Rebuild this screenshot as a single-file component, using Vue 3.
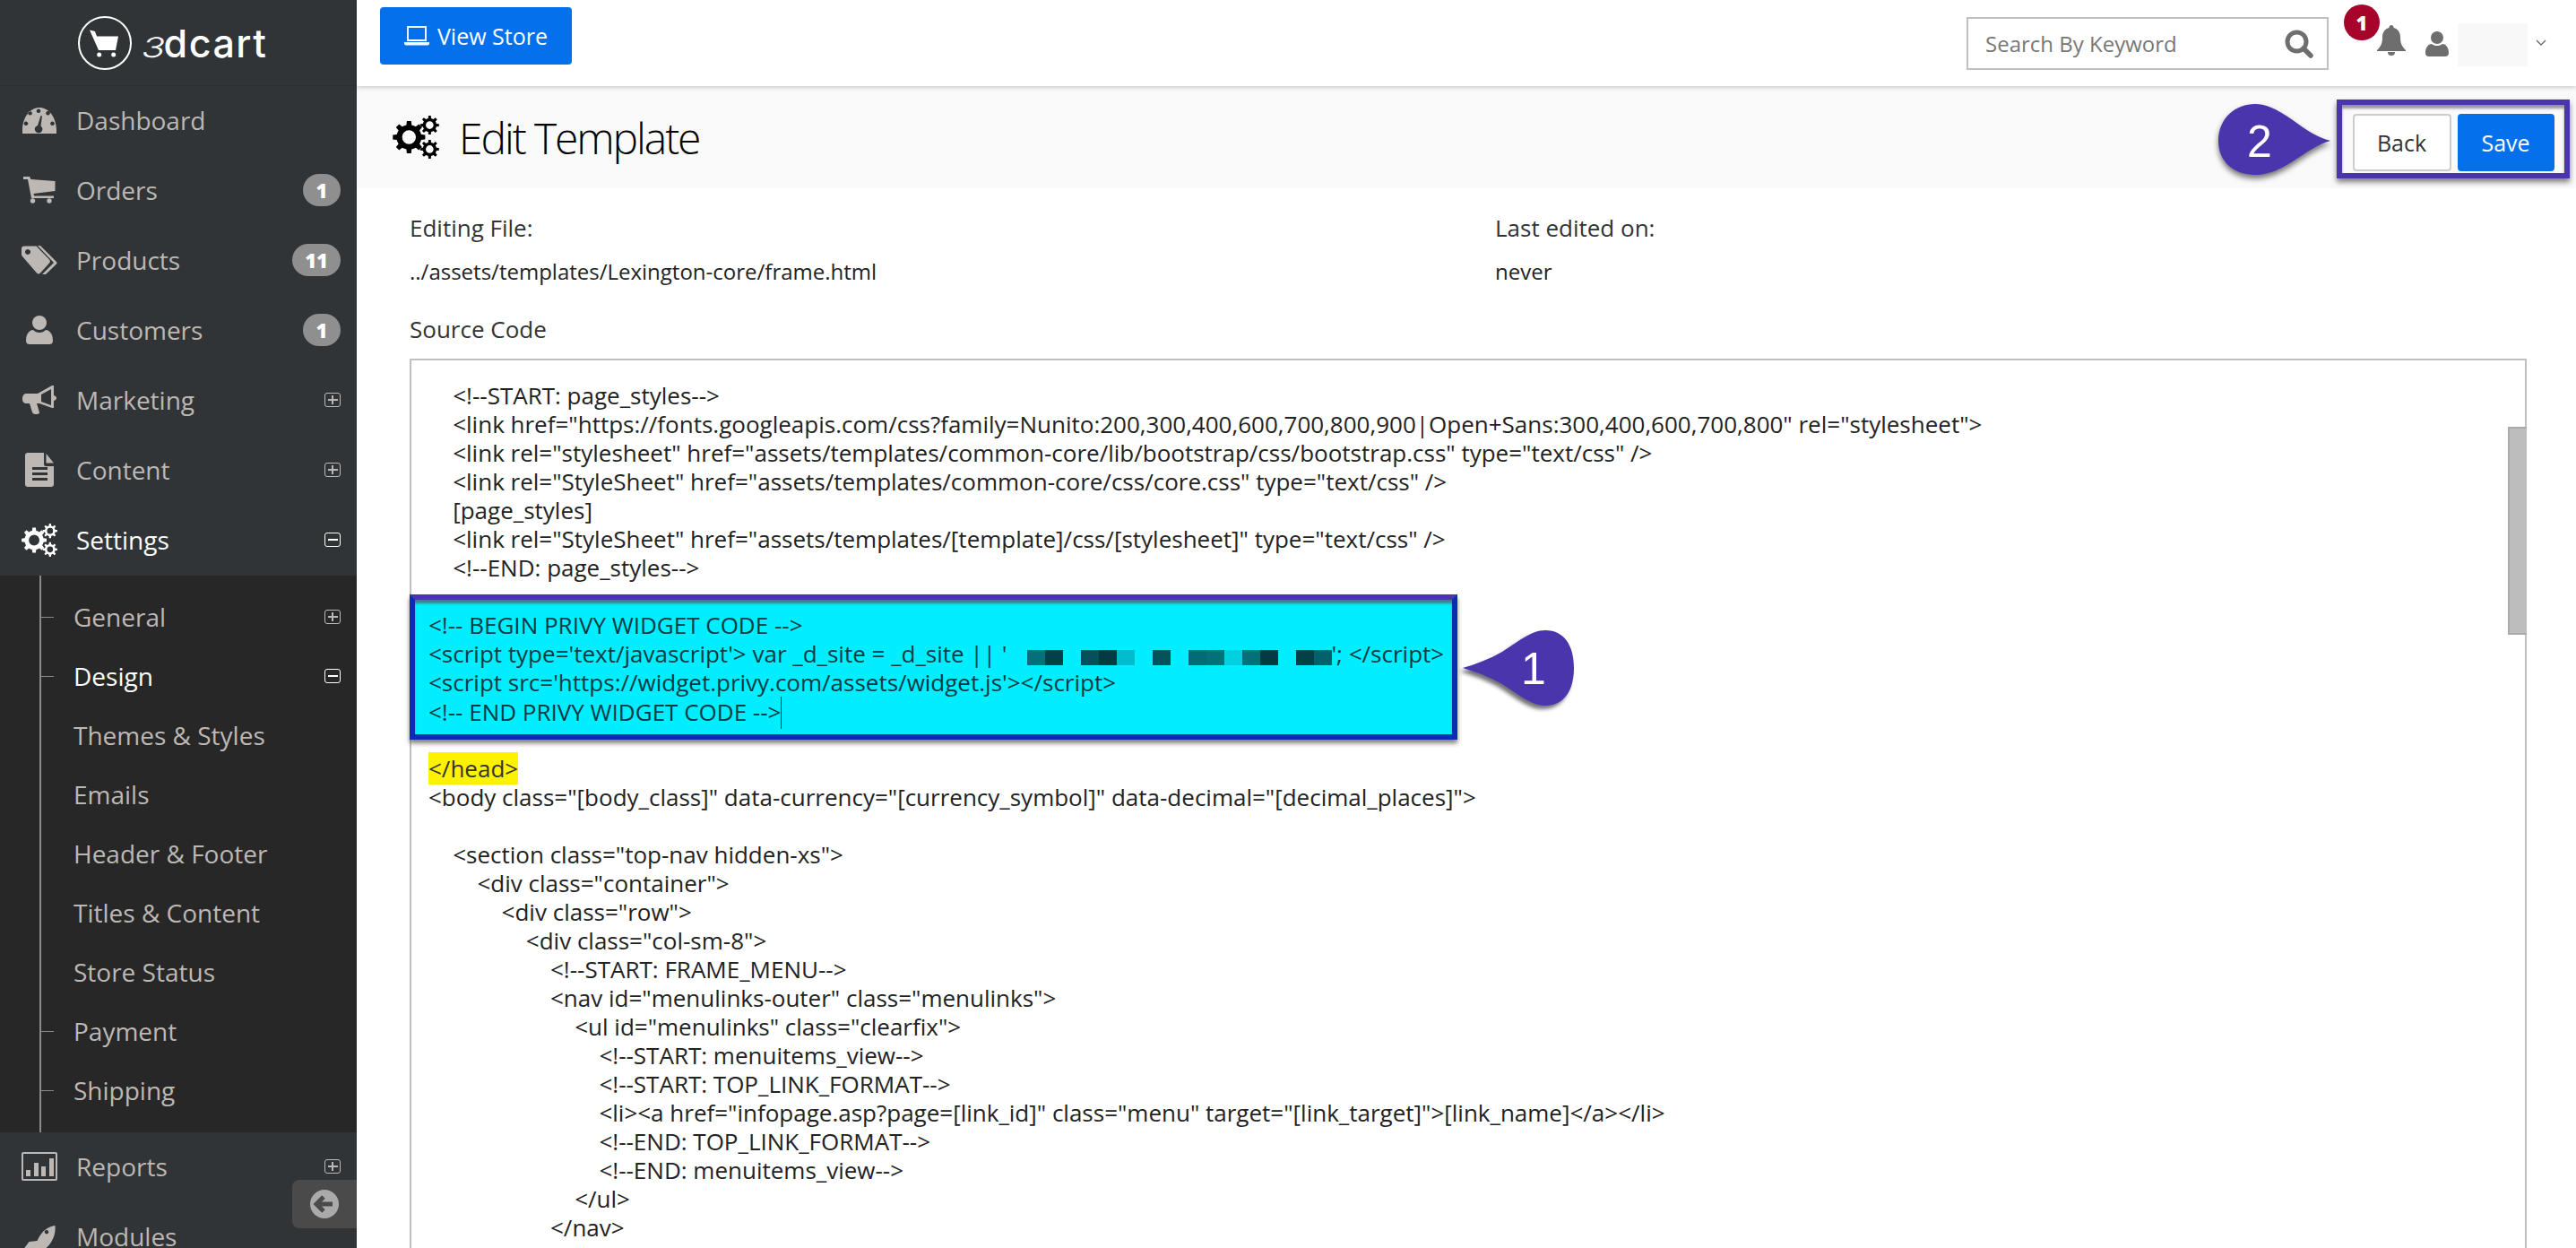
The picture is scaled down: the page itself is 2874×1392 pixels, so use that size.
<script setup>
function gear(cx, cy, ro, ri, hole, teeth) {
  let d = ''
  const step = (Math.PI * 2) / teeth
  for (let i = 0; i < teeth; i++) {
    const a = i * step
    const pts = [
      [ri, a - step * 0.5],
      [ri, a - step * 0.27],
      [ro, a - step * 0.17],
      [ro, a + step * 0.17],
      [ri, a + step * 0.27]
    ]
    pts.forEach((p, j) => {
      const x = (cx + p[0] * Math.cos(p[1])).toFixed(2)
      const y = (cy + p[0] * Math.sin(p[1])).toFixed(2)
      d += (i === 0 && j === 0 ? 'M' : 'L') + x + ' ' + y
    })
  }
  d += 'Z'
  d += `M${cx - hole} ${cy}a${hole} ${hole} 0 1 0 ${hole * 2} 0a${hole} ${hole} 0 1 0 ${-hole * 2} 0Z`
  return d
}
const gears = gear(19, 25, 19, 14.5, 8, 8) + gear(43, 11, 11, 8, 4.5, 8) + gear(43, 39, 11, 8, 4.5, 8)

const mainNav = [
  { key: 'dash', label: 'Dashboard' },
  { key: 'cart', label: 'Orders', badge: '1' },
  { key: 'tags', label: 'Products', badge: '11' },
  { key: 'user', label: 'Customers', badge: '1' },
  { key: 'horn', label: 'Marketing', tog: 'plus' },
  { key: 'file', label: 'Content', tog: 'plus' }
]
const subNav = [
  { label: 'General', tick: true, tog: 'plus' },
  { label: 'Design', tick: true, tog: 'minus', active: true },
  { label: 'Themes & Styles' },
  { label: 'Emails' },
  { label: 'Header & Footer' },
  { label: 'Titles & Content' },
  { label: 'Store Status' },
  { label: 'Payment', tick: true },
  { label: 'Shipping', tick: true }
]
const before = [
  [1, '<!--START: page_styles-->'],
  [1, '<link href="https://fonts.googleapis.com/css?family=Nunito:200,300,400,600,700,800,900|Open+Sans:300,400,600,700,800" rel="stylesheet">'],
  [1, '<link rel="stylesheet" href="assets/templates/common-core/lib/bootstrap/css/bootstrap.css" type="text/css" />'],
  [1, '<link rel="StyleSheet" href="assets/templates/common-core/css/core.css" type="text/css" />'],
  [1, '[page_styles]'],
  [1, '<link rel="StyleSheet" href="assets/templates/[template]/css/[stylesheet]" type="text/css" />'],
  [1, '<!--END: page_styles-->']
]
const after = [
  [0, '<body class="[body_class]" data-currency="[currency_symbol]" data-decimal="[decimal_places]">'],
  [0, '\u00a0'],
  [1, '<section class="top-nav hidden-xs">'],
  [2, '<div class="container">'],
  [3, '<div class="row">'],
  [4, '<div class="col-sm-8">'],
  [5, '<!--START: FRAME_MENU-->'],
  [5, '<nav id="menulinks-outer" class="menulinks">'],
  [6, '<ul id="menulinks" class="clearfix">'],
  [7, '<!--START: menuitems_view-->'],
  [7, '<!--START: TOP_LINK_FORMAT-->'],
  [7, '<li><a href="infopage.asp?page=[link_id]" class="menu" target="[link_target]">[link_name]</a></li>'],
  [7, '<!--END: TOP_LINK_FORMAT-->'],
  [7, '<!--END: menuitems_view-->'],
  [6, '</ul>'],
  [5, '</nav>']
]
const redact = ['#04707a', '#034049', 'transparent', '#05505a', '#033a44', '#00bccc', 'transparent', '#03525c', 'transparent', '#046a74', '#04707a', '#00d0e0', '#04707a', '#033a44', 'transparent', '#034049', '#04606a']
const indent = n => ({ paddingLeft: n * 27.2 + 'px' })
</script>

<template>
  <div class="app">
    <aside class="sidebar">
      <div class="logo">
        <svg class="logo-mark" viewBox="0 0 60 60">
          <circle cx="30" cy="30" r="29" fill="none" stroke="#fff" stroke-width="2" />
          <path d="M13 15.500l6 1.500 2 5.500h24l-3 15.500H23z" fill="#fff" />
          <circle cx="23.700" cy="43" r="2.500" fill="#fff" /><circle cx="39.700" cy="43" r="2.500" fill="#fff" />
        </svg>
        <span class="logo-text"><i>3</i>dcart</span>
      </div>

      <nav class="nav">
        <a v-for="item in mainNav" :key="item.key" class="row">
          <span class="ico">
            <svg v-if="item.key === 'dash'" viewBox="0 0 38 29" width="38" height="29"><path fill-rule="evenodd" d="M0 29C-1 12 8 0 19 0s20 12 19 29zM18 1.500a2.300 2.300 0 1 0 .01 0zM8.500 4a2.300 2.300 0 1 0 .01 0zM28.500 4a2.300 2.300 0 1 0 .01 0zM4 15.500a2.300 2.300 0 1 0 .01 0zM33.500 15.500a2.300 2.300 0 1 0 .01 0zM20.500 9l1.500.3-1.500 11.200a4.300 4.300 0 1 1-3.500-.6z" /></svg>
            <svg v-else-if="item.key === 'cart'" viewBox="0 0 36 30" width="36" height="30"><path d="M0 0h7l1.500 3 27 2v11l-24 3 .5 2.500h22v2.500H9L5 3H0z" /><circle cx="10.500" cy="27" r="2.700" /><circle cx="29" cy="27" r="2.700" /></svg>
            <svg v-else-if="item.key === 'tags'" viewBox="0 0 40 32" width="40" height="32"><path fill-rule="evenodd" d="M0 3.500A3 3 0 0 1 3 .5h13.500L31 15.500a3 3 0 0 1 0 4L21 30.500a3 3 0 0 1-4 0L1 12a3 3 0 0 1-1-2.500zM7 4a3 3 0 1 0 .01 0z" /><path d="M18 0h3l18 18a2 2 0 0 1 0 2.500L27 32h-4l13-13z" /></svg>
            <svg v-else-if="item.key === 'user'" viewBox="0 0 30 32" width="30" height="32"><circle cx="15" cy="8" r="8" /><path d="M0 28c0-9 5-12 8-12 2 2 4 3 7 3s5-1 7-3c3 0 8 3 8 12 0 3-2 4-4 4H4c-2 0-4-1-4-4z" /></svg>
            <svg v-else-if="item.key === 'horn'" viewBox="0 0 38 32" width="38" height="32"><path fill-rule="evenodd" d="M33 0h2v11c2 .5 3 2 3 3s-1 2.500-3 3v8h-2L19 20h-3l3 10c0 1-1 2-3 2s-4 0-5-2L8 20H4c-2 0-4-2-4-4v-2c0-3 2-5 4-5h13zm-1 4-11 6v8l11 4z" /></svg>
            <svg v-else viewBox="0 0 32 38" width="32" height="38"><path fill-rule="evenodd" d="M0 3a3 3 0 0 1 3-3h18v13a2 2 0 0 0 2 2h9v20a3 3 0 0 1-3 3H3a3 3 0 0 1-3-3zM8 16v3h17v-3zm0 6v3h17v-3zm0 6v3h17v-3z" /><path d="M23.500 1 32 11.500h-8.500z" /></svg>
          </span>
          <span class="label">{{ item.label }}</span>
          <span v-if="item.badge" class="badge">{{ item.badge }}</span>
          <span v-if="item.tog" class="tog" :class="item.tog"></span>
        </a>

        <a class="row on">
          <span class="ico"><svg viewBox="0 0 54 50" width="40" height="37"><path fill-rule="evenodd" :d="gears" /></svg></span>
          <span class="label">Settings</span>
          <span class="tog minus"></span>
        </a>

        <div class="sub">
          <a v-for="s in subNav" :key="s.label" class="subrow" :class="{ on: s.active, tick: s.tick }">
            <span class="label">{{ s.label }}</span>
            <span v-if="s.tog" class="tog" :class="s.tog"></span>
          </a>
        </div>

        <a class="row">
          <span class="ico"><svg viewBox="0 0 40 32" width="40" height="32"><path fill-rule="evenodd" d="M2 0h36a2 2 0 0 1 2 2v28a2 2 0 0 1-2 2H2a2 2 0 0 1-2-2V2a2 2 0 0 1 2-2zm0 2v28h36V2zM5 20h5v7H5zm9-8h5v15h-5zm8 4h5v11h-5zm9-9h5v20h-5z" /></svg></span>
          <span class="label">Reports</span>
          <span class="tog plus"></span>
        </a>
        <a class="row">
          <span class="ico"><svg class="rocket" viewBox="0 0 36 36" width="36" height="36"><path fill-rule="evenodd" d="M35.500 0c1 10-3 19-11 26l-2 9-7 5-1-8-5-5-9-1 6-8 9-1C21 5 28 1 35.500 0zM26 5a2.200 2.200 0 1 0 .01 0z" /></svg></span>
          <span class="label">Modules</span>
        </a>
      </nav>

      <button class="collapse" type="button" aria-label="Collapse">
        <svg viewBox="0 0 32 32" width="32" height="32"><circle cx="16" cy="16" r="16" fill="#aaa" /><path d="M15 8l-8 8 8 8M8 16h17" fill="none" stroke="#4a4a4a" stroke-width="5" /></svg>
      </button>
    </aside>

    <main class="main">
      <header class="top">
        <button class="btn view" type="button">
          <svg viewBox="0 0 28 22" width="28" height="22"><path fill="none" stroke="#fff" stroke-width="1.800" d="M4 1h20v15H4z" /><path fill="#fff" d="M0 18h28v1.500a2 2 0 0 1-2 2H2a2 2 0 0 1-2-2z" /></svg>
          View Store
        </button>
        <div class="search">
          <span>Search By Keyword</span>
          <svg viewBox="0 0 32 32" width="32" height="32"><circle cx="13.500" cy="13.500" r="10.500" fill="none" stroke="#6e6e6e" stroke-width="5" /><path d="M21 21l8 8" stroke="#6e6e6e" stroke-width="5.500" stroke-linecap="round" /></svg>
        </div>
        <div class="bell-wrap">
          <span class="notif">1</span>
          <svg class="bell" viewBox="0 0 32 34" width="32" height="34"><path fill="#6e6e6e" d="M16 0a2.500 2.500 0 0 1 2.500 3C23 4 26 8 26 13c0 8 2 11 6 15v1H0v-1c4-4 6-7 6-15 0-5 3-9 7.500-10A2.500 2.500 0 0 1 16 0zM12 30h8a4 4 0 0 1-8 0z" /></svg>
        </div>
        <svg class="person" viewBox="0 0 26 28" width="26" height="28"><circle cx="13" cy="7" r="7" fill="#6e6e6e" /><path fill="#6e6e6e" d="M0 24c0-7 4-10 7-10 2 1.500 3.500 2 6 2s4-.5 6-2c3 0 7 3 7 10 0 3-2 4-4 4H4c-2 0-4-1-4-4z" /></svg>
        <span class="redacted"></span>
        <svg class="chev" viewBox="0 0 12 8" width="12" height="8"><path d="M1 1l5 5 5-5" fill="none" stroke="#666" stroke-width="1.300" /></svg>
      </header>

      <section class="title">
        <svg viewBox="0 0 54 50" width="52" height="48"><path fill-rule="evenodd" fill="#000" :d="gears" /></svg>
        <h1>Edit Template</h1>
        <div class="actions">
          <svg class="pin2" viewBox="0 0 125 80" width="125" height="80">
            <path fill="#4a35ad" d="M0 42C0 16 20 1 41 1c14 0 28 8 42 18 14 10 28 20 42 23-15 4-28 14-42 23-14 9-28 15-42 15C18 80 0 66 0 42z" />
            <text x="46" y="60" text-anchor="middle">2</text>
          </svg>
          <div class="mark">
            <button class="btn back" type="button">Back</button>
            <button class="btn save" type="button">Save</button>
          </div>
        </div>
      </section>

      <section class="content">
        <div class="meta">
          <div>
            <div class="k">Editing File:</div>
            <div class="v">../assets/templates/Lexington-core/frame.html</div>
          </div>
          <div>
            <div class="k">Last edited on:</div>
            <div class="v">never</div>
          </div>
        </div>
        <div class="k src">Source Code</div>
        <div class="code">
          <div class="thumb"></div>
          <div v-for="(l, i) in before" :key="'b' + i" class="ln" :style="indent(l[0])">{{ l[1] }}</div>
          <div class="hl">
            <div class="ln">&lt;!-- BEGIN PRIVY WIDGET CODE --&gt;</div>
            <div class="ln">&lt;script type='text/javascript'&gt; var _d_site = _d_site || '<span class="blur"><i v-for="(c, i) in redact" :key="i" :style="{ background: c }"></i></span>'; &lt;/script&gt;</div>
            <div class="ln">&lt;script src='https://widget.privy.com/assets/widget.js'&gt;&lt;/script&gt;</div>
            <div class="ln">&lt;!-- END PRIVY WIDGET CODE --&gt;<span class="caret"></span></div>
            <svg class="pin1" viewBox="0 0 124 84" width="124" height="84">
              <path fill="#4a35ad" d="M124 42c0 24-10 42-32 42C76 84 60 70 44 60 30 52 14 46 0 42c14-4 30-10 44-18C60 14 76 0 92 0c22 0 32 18 32 42z" />
              <text x="79" y="60" text-anchor="middle">1</text>
            </svg>
          </div>
          <div class="ln"><mark>&lt;/head&gt;</mark></div>
          <div v-for="(l, i) in after" :key="'a' + i" class="ln" :style="indent(l[0])">{{ l[1] }}</div>
        </div>
      </section>
    </main>
  </div>
</template>

<style>
html, body { margin: 0; background: #fff; overflow: hidden; }
</style>

<style scoped>
.app { display: flex; width: 2874px; height: 1392px; overflow: hidden; font-family: "Open Sans", sans-serif; color: #333; background: #fff; }
.sidebar { position: relative; flex: 0 0 398px; background: #303436; color: #bdb8b4; overflow: hidden; }
.logo { height: 96px; display: flex; align-items: center; padding-left: 87px; gap: 9px; box-sizing: border-box; border-bottom: 1px solid #2c2f31; }
.logo-mark { width: 60px; height: 60px; }
.logo-text { font-family: Inter, sans-serif; font-size: 43px; font-weight: 500; color: #fff; letter-spacing: 1.500px; line-height: 1; padding-top: 2px; }
.logo-text i { display: inline-block; font-style: normal; font-weight: 300; transform: skewX(-14deg) scaleY(0.72); transform-origin: 50% 85%; margin-right: -1px; }
.nav { display: block; }
.row { display: flex; align-items: center; box-sizing: border-box; height: 78px; padding: 0 18px 2px 24px; }
.ico { flex: 0 0 61px; display: flex; align-items: center; justify-content: center; padding-right: 21px; box-sizing: border-box; }
.ico svg { fill: #bdb8b4; display: block; flex: none; }
.ico .rocket { margin-top: 12px; }
.label { font-size: 28px; white-space: nowrap; }
.row .badge { margin-left: auto; background: #8f8f8f; color: #fff; font-weight: 800; font-size: 22px; line-height: 36px; height: 36px; min-width: 14px; padding: 0 14px; border-radius: 18px; text-align: center; }
.tog { position: relative; margin-left: auto; box-sizing: border-box; flex: none; width: 18px; height: 16px; border: 1.500px solid currentColor; border-radius: 3px; }
.tog::before { content: ""; position: absolute; left: 2.500px; right: 2.500px; top: 50%; height: 1.500px; margin-top: -0.750px; background: currentColor; }
.tog.plus::after { content: ""; position: absolute; top: 2px; bottom: 2px; left: 50%; width: 1.500px; margin-left: -0.750px; background: currentColor; }
.on { color: #fff; }
.on .ico svg { fill: #fff; }
.sub { position: relative; background: #272727; padding: 14px 0 13px; }
.sub::before { content: ""; position: absolute; left: 44px; top: 0; bottom: 0; width: 2px; background: #8a8a8a; }
.subrow { position: relative; display: flex; align-items: center; box-sizing: border-box; height: 66px; padding: 0 18px 2px 82px; }
.subrow.tick::before { content: ""; position: absolute; left: 46px; top: 32px; width: 14px; height: 1px; background: #8a8a8a; }
.collapse { position: absolute; right: 0; top: 1316px; width: 72px; height: 54px; padding: 0; border: 0; background: #4a4a4a; border-radius: 8px 0 0 8px; display: flex; align-items: center; justify-content: center; }

.main { flex: 1; min-width: 0; display: flex; flex-direction: column; }
.top { position: relative; z-index: 2; height: 96px; flex: none; box-sizing: border-box; display: flex; align-items: flex-start; padding: 8px 0 0 26px; background: #fff; box-shadow: 0 2px 5px rgba(0,0,0,.18); }
.btn { font-family: inherit; font-size: 25px; border-radius: 4px; border: 0; height: 64px; box-sizing: border-box; padding: 0; }
.view { width: 214px; background: #0570ec; color: #fff; display: flex; align-items: center; justify-content: center; gap: 9px; }
.search { margin-left: auto; margin-top: 11px; width: 404px; height: 59px; box-sizing: border-box; border: 2px solid #c0c0c0; display: flex; align-items: center; justify-content: space-between; padding: 0 15px 0 19px; color: #777; font-size: 24px; }
.bell-wrap { position: relative; width: 32px; height: 34px; margin: 20px 0 0 54px; }
.notif { position: absolute; left: -37px; top: -23px; width: 40px; height: 40px; border-radius: 50%; background: #a6042a; color: #fff; font-weight: 800; font-size: 22px; line-height: 40px; text-align: center; }
.person { margin: 27px 0 0 22px; }
.redacted { width: 78px; height: 48px; margin: 18px 0 0 10px; background: #f8f8f8; }
.chev { margin: 36px 33px 0 9px; }

.title { height: 114px; flex: none; box-sizing: border-box; background: #fafafa; display: flex; align-items: center; padding: 0 7px 0 40px; }
.title h1 { margin: 0 0 0 22px; font-size: 48px; font-weight: 300; color: #000; letter-spacing: -2.1px; }
.actions { margin-left: auto; margin-top: 4px; display: flex; align-items: center; gap: 7px; }
.pin2 { filter: drop-shadow(0 4px 3px rgba(0,0,0,.55)); overflow: visible; }
.pin2 text, .pin1 text { fill: #fff; font-family: "Liberation Sans", sans-serif; font-size: 50px; }
.mark { box-sizing: border-box; width: 260px; height: 88px; border: 6px solid #4a35ad; box-shadow: 0 4px 6px rgba(0,0,0,.5), inset 0 4px 3px rgba(0,0,0,.4); display: flex; align-items: flex-end; justify-content: center; gap: 7px; padding-bottom: 2px; background: #fafafa; }
.back { width: 110px; background: #fff; color: #333; border: 2px solid #ccc; }
.save { width: 108px; background: #0570ec; color: #fff; }

.content { flex: 1; min-height: 0; padding: 0 55px 0 59px; }
.meta { display: grid; grid-template-columns: 1211px 1fr; padding-top: 27px; }
.k { font-size: 26px; line-height: 34px; color: #333; }
.v { font-size: 24px; line-height: 34px; color: #222; margin-top: 15px; }
.src { margin-top: 30px; }
.code { position: relative; margin-top: 16px; border: 2px solid #c0c0c0; height: 1100px; box-sizing: border-box; padding: 23px 0 0 19px; font-size: 26px; color: #222; }
.thumb { position: absolute; right: -2px; top: 74px; width: 21px; height: 232px; box-sizing: border-box; background: #bdbdbd; border: 2px solid #aaa; border-right: 0; }
.ln { line-height: 32px; height: 32px; white-space: nowrap; }
.hl { position: relative; margin: 14px 0 16px -21px; width: 1169px; height: 162px; box-sizing: border-box; padding: 12px 0 9px 15px; background: #00eeff; border: 6px solid #0a2cb0; border-top-color: #4a35ad; box-shadow: 0 4px 5px rgba(0,0,0,.5), inset 0 5px 3px -1px rgba(90,90,90,.75); color: #033a44; }
.blur { display: inline-flex; height: 17px; margin: 0 -1px 0 23px; vertical-align: -3px; }
.blur i { width: 20px; height: 17px; display: block; }
.caret { display: inline-block; width: 1px; height: 36px; background: #033; vertical-align: -9px; }
.pin1 { position: absolute; left: calc(100% + 12px); top: 34px; filter: drop-shadow(-3px 4px 2px rgba(0,0,0,.55)); overflow: visible; }
mark { background: #fff200; color: #333; }
</style>
